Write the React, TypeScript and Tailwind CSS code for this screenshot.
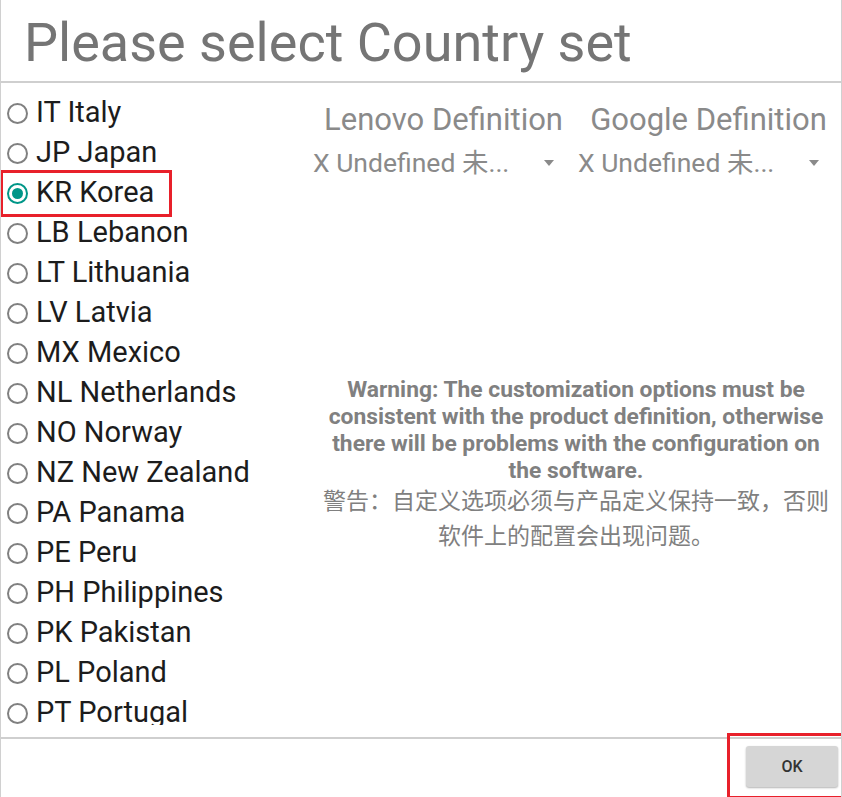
const countries = [
  "IT Italy",
  "JP Japan",
  "KR Korea",
  "LB Lebanon",
  "LT Lithuania",
  "LV Latvia",
  "MX Mexico",
  "NL Netherlands",
  "NO Norway",
  "NZ New Zealand",
  "PA Panama",
  "PE Peru",
  "PH Philippines",
  "PK Pakistan",
  "PL Poland",
  "PT Portugal",
];

function Radio({ checked }: { checked: boolean }) {
  return (
    <span
      className={
        "flex h-[21px] w-[21px] shrink-0 items-center justify-center rounded-full border-2 " +
        (checked ? "border-[#009688]" : "border-[#808080]")
      }
    >
      {checked && <span className="h-[11px] w-[11px] rounded-full bg-[#009688]" />}
    </span>
  );
}

function Dropdown() {
  return (
    <div className="flex h-[46px] items-center justify-between pl-[2px] pr-[22px]">
      <span className="text-[26.5px] text-[#8a8a8a]">X Undefined 未...</span>
      <svg width="10" height="6" viewBox="0 0 10 6">
        <path d="M0 0h10L5 6z" fill="#8a8a8a" />
      </svg>
    </div>
  );
}

export default function App() {
  return (
    <div
      className="flex h-[797px] w-[842px] flex-col overflow-hidden border-x border-[#d0d0d0] bg-white"
      style={{ fontFamily: "Roboto, 'Noto Sans CJK SC', sans-serif" }}
    >
      <div className="h-[83px] shrink-0 border-b-2 border-[#cfcfcf] pl-[23px] pt-[7px]">
        <h1 className="text-[54px] leading-[72px] text-[#757575]">Please select Country set</h1>
      </div>

      <div className="flex min-h-0 flex-1">
        <div className="w-[310px] shrink-0 pb-[12px]">
          <ul className="h-full overflow-hidden pt-[10px]">
            {countries.map((c) => {
              const sel = c === "KR Korea";
              return (
                <li key={c} className="flex h-[40px] items-center">
                  {sel ? (
                    <div className="-ml-px flex h-[47px] items-center gap-[8px] border-[3px] border-[#e8202a] pl-[4px] pr-[15px]">
                      <Radio checked />
                      <span className="text-[29px] text-[#1c1c1c]">{c}</span>
                    </div>
                  ) : (
                    <div className="flex items-center gap-[8px] pl-[6px]">
                      <Radio checked={false} />
                      <span className="text-[29px] text-[#1c1c1c]">{c}</span>
                    </div>
                  )}
                </li>
              );
            })}
          </ul>
        </div>

        <div className="flex flex-1 flex-col pt-[17px]">
          <div className="grid grid-cols-2">
            <div className="text-center text-[31px] leading-[40px] text-[#8a8a8a]">Lenovo Definition</div>
            <div className="text-center text-[31px] leading-[40px] text-[#8a8a8a]">Google Definition</div>
            <Dropdown />
            <Dropdown />
          </div>

          <div className="mt-[190px] px-[4px] text-center text-[#808080]">
            <p className="text-[22.8px] font-bold leading-[27px]">
              Warning: The customization options must be consistent with the product definition, otherwise there
              will be problems with the configuration on the software.
            </p>
            <p className="text-[23px] leading-[35px]">警告：自定义选项必须与产品定义保持一致，否则软件上的配置会出现问题。</p>
          </div>
        </div>
      </div>

      <div className="flex h-[60px] shrink-0 items-start justify-end border-t-2 border-[#cfcfcf]">
        <div className="-mr-[4px] -mt-[6px] flex h-[66px] w-[118px] items-start border-[3px] border-[#e8202a] pl-[16px] pt-[10px]">
          <button className="h-[41px] w-[92px] rounded-[3px] bg-[#d6d6d6] text-[16px] font-medium text-[#333] shadow-[0_1px_2px_rgba(0,0,0,0.3)]">
            OK
          </button>
        </div>
      </div>
    </div>
  );
}
